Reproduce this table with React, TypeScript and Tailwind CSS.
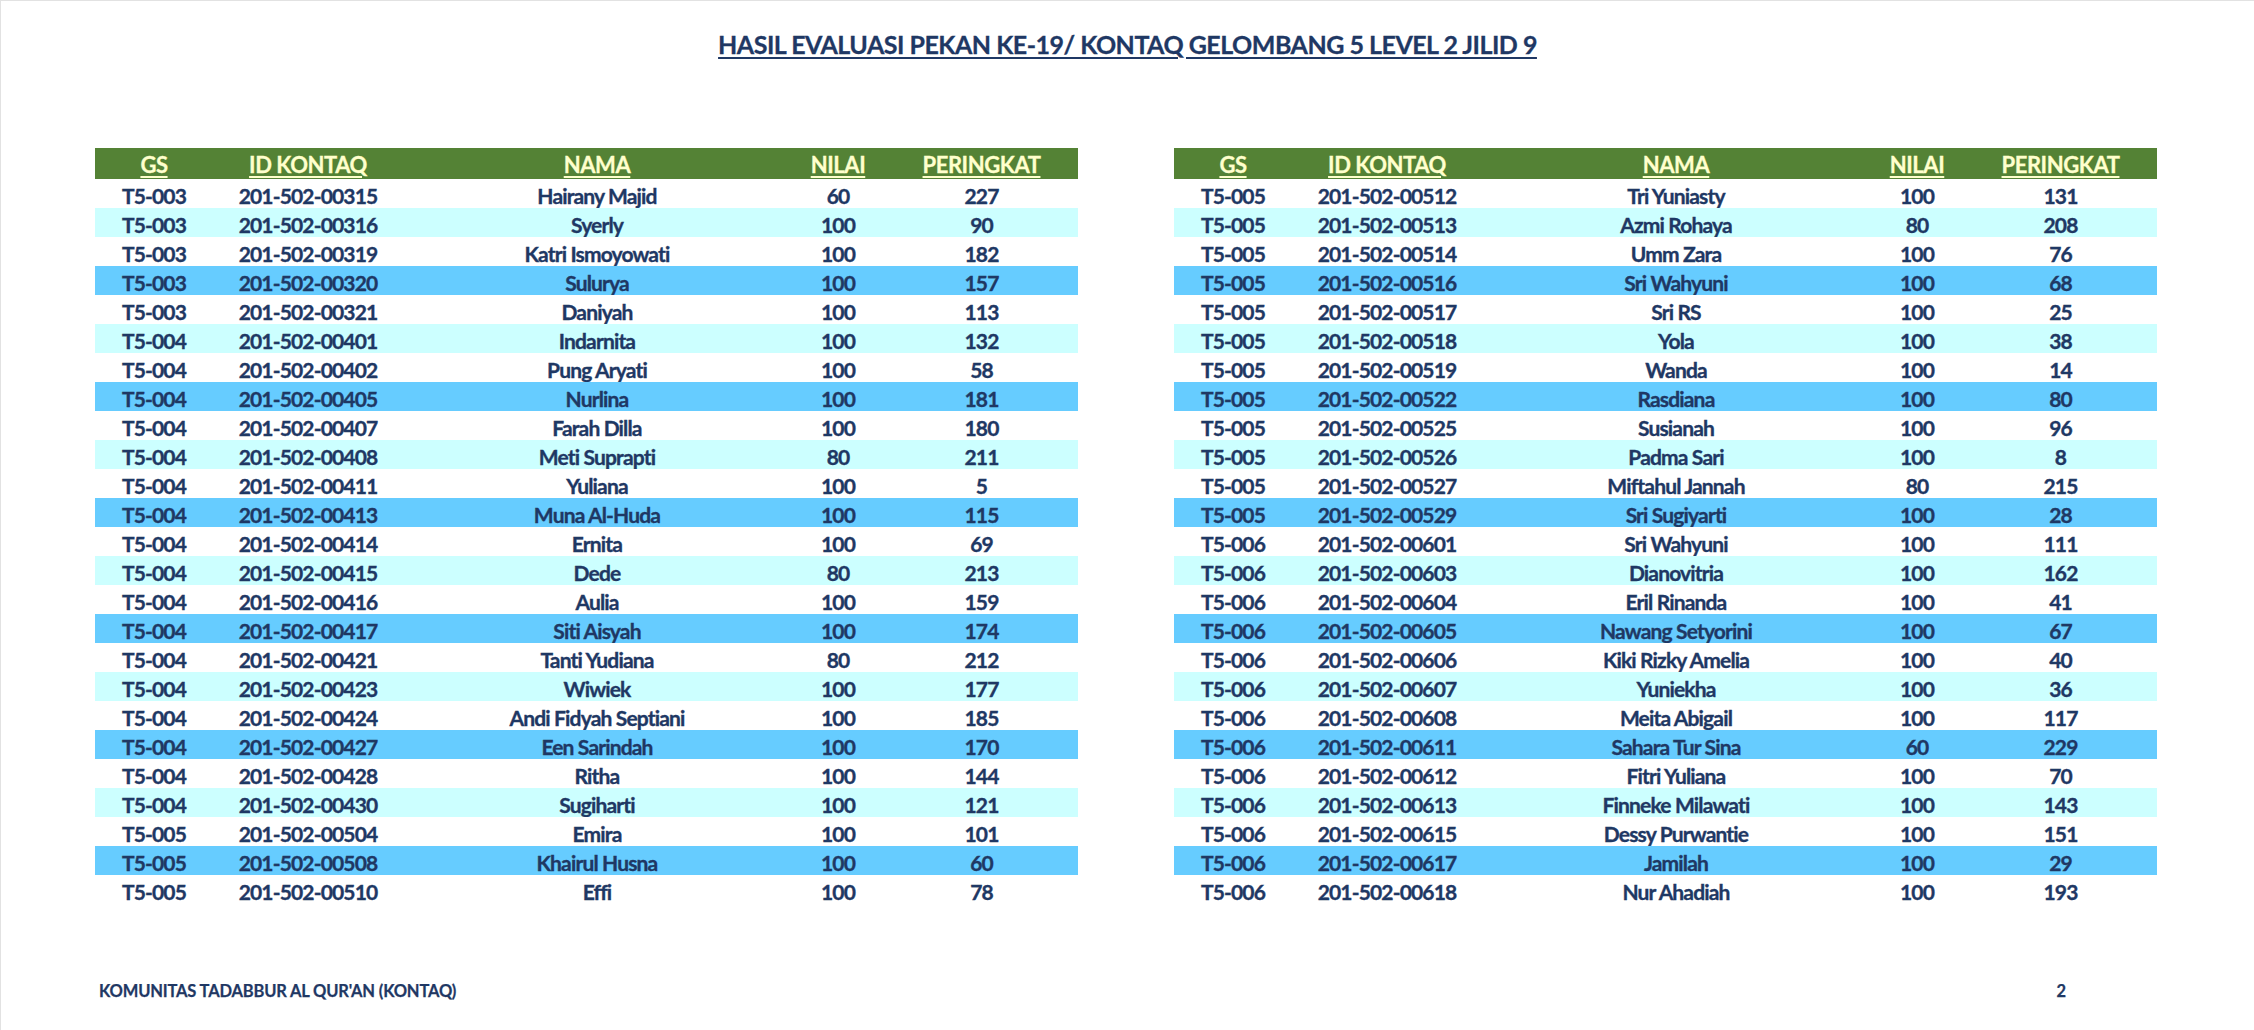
import React from "react";

type Row = [string, string, string, string, string];

const left: Row[] = [
  ["T5-003", "201-502-00315", "Hairany Majid", "60", "227"],
  ["T5-003", "201-502-00316", "Syerly", "100", "90"],
  ["T5-003", "201-502-00319", "Katri Ismoyowati", "100", "182"],
  ["T5-003", "201-502-00320", "Sulurya", "100", "157"],
  ["T5-003", "201-502-00321", "Daniyah", "100", "113"],
  ["T5-004", "201-502-00401", "Indarnita", "100", "132"],
  ["T5-004", "201-502-00402", "Pung Aryati", "100", "58"],
  ["T5-004", "201-502-00405", "Nurlina", "100", "181"],
  ["T5-004", "201-502-00407", "Farah Dilla", "100", "180"],
  ["T5-004", "201-502-00408", "Meti Suprapti", "80", "211"],
  ["T5-004", "201-502-00411", "Yuliana", "100", "5"],
  ["T5-004", "201-502-00413", "Muna Al-Huda", "100", "115"],
  ["T5-004", "201-502-00414", "Ernita", "100", "69"],
  ["T5-004", "201-502-00415", "Dede", "80", "213"],
  ["T5-004", "201-502-00416", "Aulia", "100", "159"],
  ["T5-004", "201-502-00417", "Siti Aisyah", "100", "174"],
  ["T5-004", "201-502-00421", "Tanti Yudiana", "80", "212"],
  ["T5-004", "201-502-00423", "Wiwiek", "100", "177"],
  ["T5-004", "201-502-00424", "Andi Fidyah Septiani", "100", "185"],
  ["T5-004", "201-502-00427", "Een Sarindah", "100", "170"],
  ["T5-004", "201-502-00428", "Ritha", "100", "144"],
  ["T5-004", "201-502-00430", "Sugiharti", "100", "121"],
  ["T5-005", "201-502-00504", "Emira", "100", "101"],
  ["T5-005", "201-502-00508", "Khairul Husna", "100", "60"],
  ["T5-005", "201-502-00510", "Effi", "100", "78"],
];

const right: Row[] = [
  ["T5-005", "201-502-00512", "Tri Yuniasty", "100", "131"],
  ["T5-005", "201-502-00513", "Azmi Rohaya", "80", "208"],
  ["T5-005", "201-502-00514", "Umm Zara", "100", "76"],
  ["T5-005", "201-502-00516", "Sri Wahyuni", "100", "68"],
  ["T5-005", "201-502-00517", "Sri RS", "100", "25"],
  ["T5-005", "201-502-00518", "Yola", "100", "38"],
  ["T5-005", "201-502-00519", "Wanda", "100", "14"],
  ["T5-005", "201-502-00522", "Rasdiana", "100", "80"],
  ["T5-005", "201-502-00525", "Susianah", "100", "96"],
  ["T5-005", "201-502-00526", "Padma Sari", "100", "8"],
  ["T5-005", "201-502-00527", "Miftahul Jannah", "80", "215"],
  ["T5-005", "201-502-00529", "Sri Sugiyarti", "100", "28"],
  ["T5-006", "201-502-00601", "Sri Wahyuni", "100", "111"],
  ["T5-006", "201-502-00603", "Dianovitria", "100", "162"],
  ["T5-006", "201-502-00604", "Eril Rinanda", "100", "41"],
  ["T5-006", "201-502-00605", "Nawang Setyorini", "100", "67"],
  ["T5-006", "201-502-00606", "Kiki Rizky Amelia", "100", "40"],
  ["T5-006", "201-502-00607", "Yuniekha", "100", "36"],
  ["T5-006", "201-502-00608", "Meita Abigail", "100", "117"],
  ["T5-006", "201-502-00611", "Sahara Tur Sina", "60", "229"],
  ["T5-006", "201-502-00612", "Fitri Yuliana", "100", "70"],
  ["T5-006", "201-502-00613", "Finneke Milawati", "100", "143"],
  ["T5-006", "201-502-00615", "Dessy Purwantie", "100", "151"],
  ["T5-006", "201-502-00617", "Jamilah", "100", "29"],
  ["T5-006", "201-502-00618", "Nur Ahadiah", "100", "193"],
];

const headers = ["GS", "ID KONTAQ", "NAMA", "NILAI", "PERINGKAT"];

function rowBg(i: number): string {
  if (i % 4 === 1) return "bg-[#ccffff]";
  if (i % 4 === 3) return "bg-[#66ccff]";
  return "bg-white";
}

function Table({ rows }: { rows: Row[] }) {
  return (
    <div className="w-[983px] flex flex-col">
      <div className="grid grid-cols-[118px_190px_388px_94px_193px] h-[31px] bg-[#548235] text-[#ffffcc] text-[22px] tracking-[-0.02em] [-webkit-text-stroke:0.3px_#ffffcc]">
        {headers.map((h) => (
          <div key={h} className="flex items-center justify-center pt-[1px]">
            <span className="underline decoration-[2px] underline-offset-[3px]">{h}</span>
          </div>
        ))}
      </div>
      {rows.map((r, i) => (
        <div
          key={i}
          className={`grid grid-cols-[118px_190px_388px_94px_193px] h-[29px] text-[#1f3864] [-webkit-text-stroke:0.35px_#1f3864] ${rowBg(i)}`}
        >
          {r.map((c, j) => (
            <div key={j} className="flex items-center justify-center pt-[2px] whitespace-nowrap">
              {c}
            </div>
          ))}
        </div>
      ))}
    </div>
  );
}

export default function App() {
  return (
    <div
      className="w-[2254px] h-[1030px] bg-white border-t border-l border-[#e2e2e2] flex flex-col font-bold text-[21px] leading-[29px] tracking-[-0.04em]"
      style={{ fontFamily: "Lato, 'Noto Sans', sans-serif" }}
    >
      <div className="h-[147px] flex justify-center pt-[27px]">
        <h1 className="text-[25px] leading-[32px] text-[#1f3864] underline decoration-[2px] underline-offset-[3px] tracking-[-0.02em] [-webkit-text-stroke:0.3px_#1f3864]">
          HASIL EVALUASI PEKAN KE-19/ KONTAQ GELOMBANG 5 LEVEL 2 JILID 9
        </h1>
      </div>
      <div className="flex gap-[96px] pl-[94px]">
        <Table rows={left} />
        <Table rows={right} />
      </div>
      <div className="flex items-center pl-[98px] pr-[188px] mt-[77px] text-[#1f3864] text-[16.5px] leading-[20px] tracking-[-0.01em] [-webkit-text-stroke:0.25px_#1f3864]">
        <span className="flex-1">KOMUNITAS TADABBUR AL QUR'AN (KONTAQ)</span>
        <span>2</span>
      </div>
    </div>
  );
}
